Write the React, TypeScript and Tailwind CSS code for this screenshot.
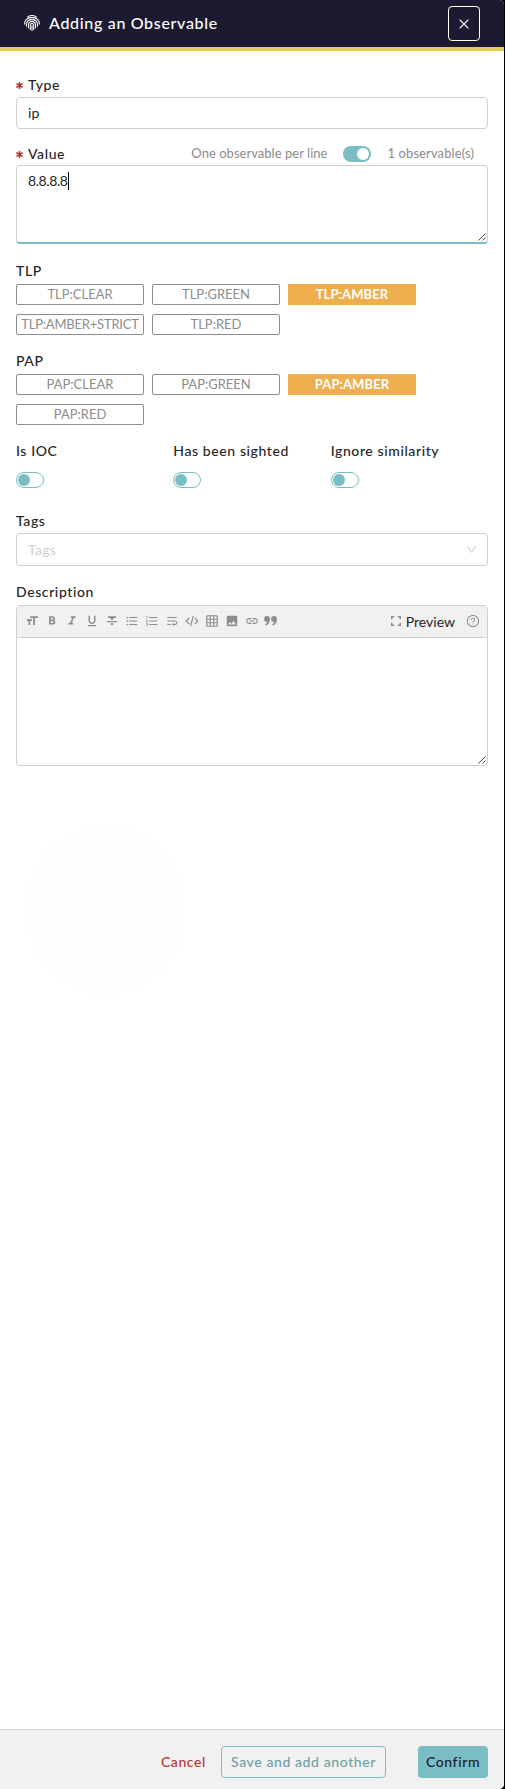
import type { ReactNode } from "react";
import {
  MdFormatSize, MdFormatBold, MdFormatItalic, MdFormatUnderlined, MdFormatStrikethrough,
  MdFormatListBulleted, MdFormatListNumbered, MdWrapText, MdGridOn, MdImage, MdLink, MdFormatQuote,
} from "react-icons/md";
import { AiOutlineClose, AiOutlineDown, AiOutlineQuestionCircle } from "react-icons/ai";

function CodeIcon({ className }: { className?: string }) {
  return (
    <svg viewBox="0 0 14 14" className={className} fill="none" stroke="currentColor" strokeWidth="1.2">
      <path d="M4.2 3.8L1.2 7l3 3.2M9.8 3.8l3 3.2-3 3.2M8.3 2.2L5.7 11.8" />
    </svg>
  );
}

function Fingerprint() {
  return (
    <svg viewBox="0 0 16 16" className="size-4" fill="none" stroke="currentColor" strokeWidth="1.1" strokeLinecap="round">
      <path d="M3.6 1.9C6.3.2 9.7.2 12.4 1.9M.7 9.2C.3 6 2.9 2.4 8 2.4s7.7 3.6 7.3 6.8" />
      <path d="M2.5 11.2C1.9 7.4 4.2 4.4 8 4.4s6.1 3 5.5 6.8" />
      <path d="M4.5 13C3.8 9.400 5 6.400 8 6.400S12.200 9.400 11.500 13" />
      <path d="M6.300 14.500V10.200a1.700 1.700 0 0 1 3.400 0v4.300M8 10.500v5" />
    </svg>
  );
}

const tools = [
  MdFormatSize, MdFormatBold, MdFormatItalic, MdFormatUnderlined, MdFormatStrikethrough,
  MdFormatListBulleted, MdFormatListNumbered, MdWrapText, CodeIcon, MdGridOn, MdImage, MdLink,
];

function Label({ children, required }: { children: ReactNode; required?: boolean }) {
  return (
    <div className="flex h-5 items-center text-[14px] leading-5 font-medium tracking-[0.6px] text-[#262626]">
      {required && (
        <svg viewBox="0 0 7 7" className="mr-[5px] size-[7px]" stroke="#b5281c" strokeWidth="1.5">
          <path d="M3.5 0v7M.4 1.7l6.2 3.6M.4 5.3l6.2-3.6" />
        </svg>
      )}
      {children}
    </div>
  );
}

function Switch({ on }: { on?: boolean }) {
  return on ? (
    <div className="flex h-4 w-7 items-center justify-end rounded-full bg-[#7abec3] pr-[2px]">
      <div className="size-3 rounded-full bg-white" />
    </div>
  ) : (
    <div className="flex h-4 w-7 items-center rounded-full border border-[#7abec3] bg-white pl-px">
      <div className="size-3 rounded-full bg-[#7abec3]" />
    </div>
  );
}

function Chips({ items, active }: { items: string[]; active: string }) {
  return (
    <div className="flex flex-wrap gap-x-2 gap-y-[9px]">
      {items.map((item) => (
        <div
          key={item}
          className={
            item === active
              ? "flex h-[21px] w-32 items-center justify-center bg-[#efae4e] text-[13px] leading-[19px] font-bold tracking-[0.1px] text-white"
              : "flex h-[21px] w-32 items-center justify-center rounded-[2px] border border-[#8c8c8c] text-[13px] leading-[19px] whitespace-nowrap text-[#8c8c8c]"
          }
        >
          <span className={item.length > 12 ? "tracking-[-0.2px]" : ""}>{item}</span>
        </div>
      ))}
    </div>
  );
}

function Grip() {
  return (
    <svg viewBox="0 0 8 8" className="absolute right-[1px] bottom-[1px] size-2" stroke="#444" strokeWidth="1">
      <path d="M0.5 7.5l7-7M4.5 7.5l3-3" />
    </svg>
  );
}

export default function App() {
  return (
    <div className="h-[1789px] w-[505px] bg-black pr-px font-['Lato','Open_Sans',sans-serif] text-[14px] text-[#262626]">
      <div className="relative flex h-full flex-col overflow-hidden rounded-r-[5px] bg-white">
        <header className="flex h-[51px] items-center justify-between border-b-4 border-[#e2ce52] bg-[#1b1a31] px-6 text-white">
          <div className="flex items-center gap-[9px] pb-[2px]">
            <Fingerprint />
            <h1 className="text-[16px] leading-6 font-medium tracking-[0.68px]">Adding an Observable</h1>
          </div>
          <button className="flex h-[35px] w-8 items-center justify-center rounded-[4px] border border-white">
            <AiOutlineClose className="size-[14px]" />
          </button>
        </header>

        <main className="relative flex flex-1 flex-col px-4 pt-6">
          <div className="absolute top-[774px] left-7 h-[170px] w-[156px] rounded-full bg-[#fefefe]" />
          <Label required>Type</Label>
          <div className="mt-0.5 flex h-8 items-center rounded-[4px] border border-[#d0d0d0] px-[11px] pb-[2px] tracking-[0.2px]">ip</div>

          <div className="mt-[15px] flex items-center">
            <Label required>Value</Label>
            <div className="ml-auto flex items-center pr-[14px] text-[13px] text-[#8c8c8c]">
              <span className="tracking-[0.03px]">One observable per line</span>
              <span className="mr-4 ml-4"><Switch on /></span>
              <span className="tracking-[0.1px]">1 observable(s)</span>
            </div>
          </div>
          <div className="relative mt-px flex h-[79px] items-start rounded-[4px] border border-b-2 border-[#d0d0d0] border-b-[#7abec3] px-[11px] pt-[5px]">
            <span className="leading-5 tracking-[-0.4px]">8.8.8.8</span>
            <span className="mt-px h-[18px] w-px bg-black" />
            <Grip />
          </div>

          <div className="mt-[17px]"><Label>TLP</Label></div>
          <div className="mt-[3px]"><Chips items={["TLP:CLEAR", "TLP:GREEN", "TLP:AMBER", "TLP:AMBER+STRICT", "TLP:RED"]} active="TLP:AMBER" /></div>
          <div className="mt-4"><Label>PAP</Label></div>
          <div className="mt-[3px]"><Chips items={["PAP:CLEAR", "PAP:GREEN", "PAP:AMBER", "PAP:RED"]} active="PAP:AMBER" /></div>

          <div className="mt-4 grid grid-cols-3">
            {["Is IOC", "Has been sighted", "Ignore similarity"].map((t) => (
              <div key={t} className="flex flex-col gap-[11px]">
                <Label>{t}</Label>
                <Switch />
              </div>
            ))}
          </div>

          <div className="mt-[23px]"><Label>Tags</Label></div>
          <div className="mt-[2px] flex h-[33px] items-center justify-between rounded-[4px] border border-[#d0d0d0] pr-[9px] pl-[11px] text-[#cfcfcf]">
            <span className="tracking-[0.3px]">Tags</span>
            <AiOutlineDown className="size-[13px]" />
          </div>

          <div className="mt-4"><Label>Description</Label></div>
          <div className="relative mt-[3px] h-[161px] rounded-[4px] border border-[#d0d0d0]">
            <div className="flex h-8 items-center rounded-t-[3px] border-b border-[#d0d0d0] bg-[#f1f1f1] pb-px pl-2 text-[#8c8c8c]">
              <div className="flex items-center gap-[6px]">
                {tools.map((Icon, i) => <Icon key={i} className="size-[14px]" />)}
                <svg viewBox="0 0 13 10" className="-ml-px h-[10px] w-[13px]" fill="currentColor">
                  <circle cx="3" cy="3" r="2.900" />
                  <path d="M5.900 3c0 4-1.800 6.100-4.400 6.600V7.900C3.200 7.300 3.800 6 3.800 4z" />
                  <circle cx="10" cy="3" r="2.900" />
                  <path d="M12.900 3c0 4-1.800 6.100-4.400 6.600V7.900c1.700-.6 2.300-1.900 2.300-3.900z" />
                </svg>
              </div>
              <div className="ml-auto flex items-center pr-[7px]">
                <svg viewBox="0 0 10 10" className="mr-[5px] size-[10px]" fill="none" stroke="currentColor" strokeWidth="1.4">
                  <path d="M.7 3.2V.7h2.5M6.8.7h2.5v2.5M9.3 6.8v2.5H6.8M3.2 9.3H.7V6.8" />
                </svg>
                <span className="text-[#262626]">Preview</span>
                <AiOutlineQuestionCircle className="ml-[11px] size-[14px]" />
              </div>
            </div>
            <Grip />
          </div>
        </main>

        <footer className="flex h-[60px] items-center justify-end border-t border-[#d0d0d0] bg-[#f1f1f1] pt-[11px] pr-4 pb-[6px] font-medium tracking-[0.6px]">
          <button className="mr-[15px] h-8 pb-[2px] text-[#b83227]">Cancel</button>
          <button className="mr-8 h-8 w-[165px] rounded-[4px] border border-[#7abec3] pb-[2px] whitespace-nowrap text-[#6fa0a5]">Save and add another</button>
          <button className="h-8 w-[70px] rounded-[4px] bg-[#7abec3] pb-[2px] text-[#1b1a31]">Confirm</button>
        </footer>
      </div>
    </div>
  );
}
